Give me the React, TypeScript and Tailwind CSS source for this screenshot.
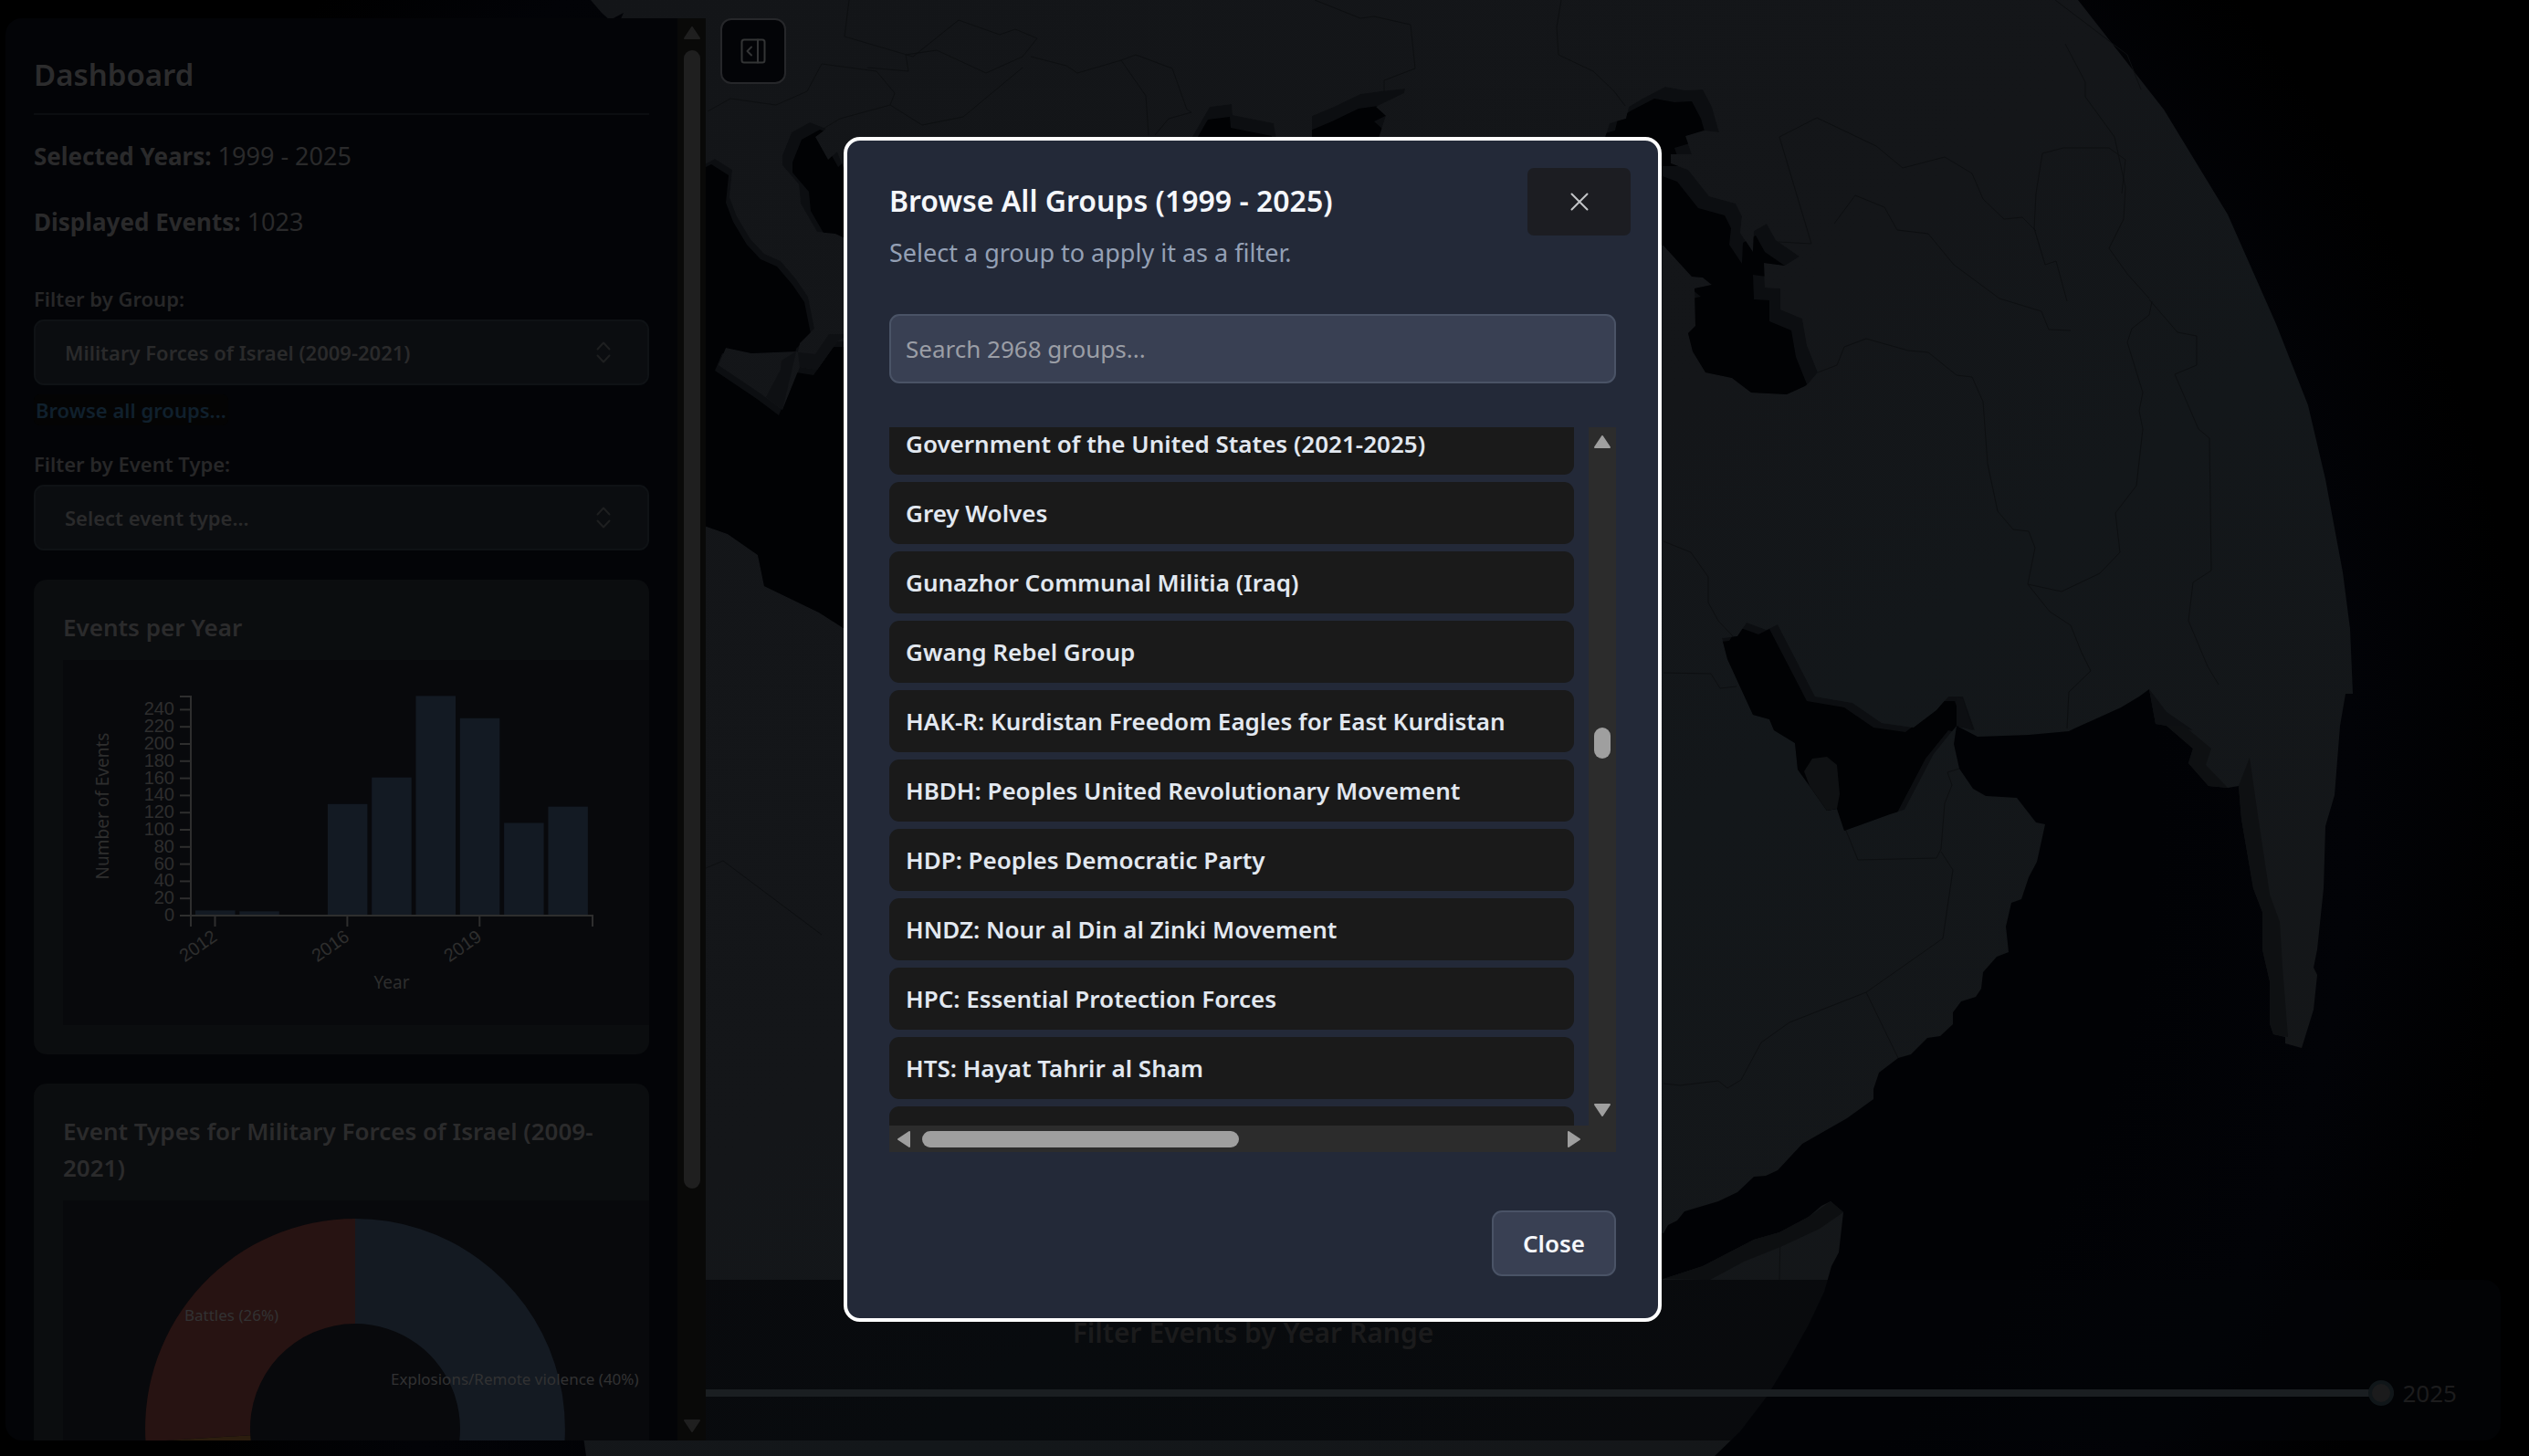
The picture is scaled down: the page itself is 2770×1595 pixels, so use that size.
import type { ReactNode } from "react";

const GROUPS = [
  "Government of the United States (2021-2025)",
  "Grey Wolves",
  "Gunazhor Communal Militia (Iraq)",
  "Gwang Rebel Group",
  "HAK-R: Kurdistan Freedom Eagles for East Kurdistan",
  "HBDH: Peoples United Revolutionary Movement",
  "HDP: Peoples Democratic Party",
  "HNDZ: Nour al Din al Zinki Movement",
  "HPC: Essential Protection Forces",
  "HTS: Hayat Tahrir al Sham",
];

const YEARLY_EVENTS = [6, 5, 1, 130, 161, 256, 230, 108, 127];
const Y_TICKS = [0, 20, 40, 60, 80, 100, 120, 140, 160, 180, 200, 220, 240];
const X_TICKS = [
  { label: "2012", index: 0 },
  { label: "2016", index: 3 },
  { label: "2019", index: 6 },
];

/* ---------- globe backdrop ---------- */

const LAND =
  "M647 0 659 14 668 22 683 14 676 30 660 60 640 200 620 700 600 1300 642 1595 L1878 1595 1906 1568 1935 1530 1957 1494 1981 1451 1998 1415 2006 1387 2014 1372 2019 1328 2005 1316 1995 1321 1981 1333 1949 1350 1921 1358 1892 1373 1865 1387 1822 1401 1700 1420 1700 1340 1822 1351 1827 1342 1837 1337 1845 1327 1882 1316 1903 1306 1921 1289 1934 1288 1947 1282 1974 1253 2023 1225 2052 1204 2052 1193 2058 1175 2079 1159 2093 1155 2111 1137 2125 1135 2139 1122 2139 1109 2148 1097 2164 1092 2170 1083 2172 1065 2187 1048 2200 1043 2197 1015 2203 989 2214 985 2222 961 2231 944 2240 903 2230 901 2209 874 2175 872 2161 864 2146 842 2140 815 2143 795 2166 807 2222 805 2266 801 2272 798 2323 775 2343 763 2354 755 2361 793 2373 795 2402 820 2397 836 2419 861 2440 863 2452 861 2455 897 2468 973 2478 999 2478 1040 2486 1075 2486 1121 2490 1133 2503 1136 2503 1143 2521 1148 2534 1106 2538 1068 2534 1060 2538 1040 2545 973 2547 905 2557 871 2563 795 2569 760 2577 760 2574 689 2566 627 2547 525 2528 444 2493 355 2440 235 2370 120 2276 0Z";

type Sea = { id: string; d: string; dx: number; dy: number };

const SEAS: Sea[] = [
  {
    id: "tyrrhenian",
    d: "M760 186 783 174 802 186 799 216 807 237 822 262 837 278 855 286 872 306 885 325 892 360 876 376 874 386 872 385 823 387 795 381 787 400 833 431 857 449 876 402 895 405 917 374 930 374 930 692 897 671 837 642 830 608 797 585 760 572Z",
    dx: -4,
    dy: 6,
  },
  {
    id: "adriatic",
    d: "M857 170 867 145 887 134 905 141 893 150 907 175 917 166 930 200 930 263 915 256 895 254 877 223 875 202 857 181Z",
    dx: 11,
    dy: 8,
  },
  { id: "black", d: "M1300 160 1325 117 1349 114 1350 126 1395 135 1397 147 1400 160Z", dx: -2, dy: 14 },
  { id: "azov", d: "M1437 160 1437 127 1461 117 1490 103 1512 100 1539 97 1538 102 1507 117 1518 127 1507 160Z", dx: -2, dy: 16 },
  {
    id: "caspian",
    d: "M1752 170 1763 135 1781 130 1784 117 1799 108 1824 95 1846 99 1865 98 1875 117 1883 145 1866 143 1846 149 1853 169 1830 169 1830 179 1849 186 1872 215 1901 223 1908 237 1906 255 1920 276 1921 253 1935 245 1945 263 1971 281 1955 291 1932 288 1933 315 1950 316 1950 339 1974 349 1979 378 1991 408 1979 422 1957 432 1918 430 1897 414 1868 408 1854 385 1849 365 1857 357 1856 316 1875 312 1865 304 1853 303 1822 269 1760 240Z",
    dx: -12,
    dy: 13,
  },
  {
    id: "gulf",
    d: "M1903 697 1913 682 1935 690 1947 684 1988 763 2029 770 2061 792 2096 797 2121 778 2134 763 2150 763 2163 800 2143 795 2118 826 2086 887 2070 892 2020 910 2012 886 2001 888 1982 861 1969 843 1966 814 1943 800 1938 788 1920 783 1892 722 1886 699Z",
    dx: -9,
    dy: 5,
  },
];

const BORDERS = [
  "M1948 265 1984 267 1949 150 1990 129 2055 160 2084 184 2130 172 2160 190 2172 218 2195 240 2215 238 2230 253",
  "M2009 245 2032 214 2064 227 2078 252 2112 256 2140 290 2190 327 2236 341 2244 361 2268 362",
  "M1991 408 2012 400 2020 380 2044 371 2090 384 2112 386 2143 411 2160 413 2172 440 2177 508 2188 560 2205 580 2222 582 2229 600 2221 640 2258 648 2300 628 2322 605 2317 562 2340 532 2347 470 2343 450 2347 430 2330 375 2335 360 2354 345 2357 330",
  "M2354 328 2385 364 2406 368 2406 400 2382 410 2408 470 2420 480 2422 625 2402 638 2397 680 2418 730 2430 750",
  "M2251 0 2330 60 2345 98 M2262 48 2284 90 2284 106 2316 150 2328 205 2326 240 2310 272 2330 300 2354 327",
  "M2221 640 2245 670 2268 685 2280 715 2290 735 2266 758 2264 798",
  "M2237 168 2260 162 2310 162 2328 175 2324 212 M2237 168 2230 212 2228 250 2240 290 2252 286 2264 330",
  "M1822 593 1852 605 1871 632 1871 660 1882 680 1898 697 M1822 737 1874 738 1884 754 1902 752",
  "M2020 905 2035 942 2121 940 2126 930 2130 880 2138 860 2133 846 2146 842",
  "M2126 933 2139 953 2128 1028 2044 1087 1960 1120 1929 1142 1907 1183 1892 1192 1882 1184 1840 1189 1822 1187 M2044 1087 2079 1159",
  "M930 0 925 40 1000 62 1050 22 1095 38 1112 32 1136 42 1120 62 1080 80 1026 55 992 60 995 78 950 74",
  "M1129 62 1168 72 1180 80 1228 66 1244 60 1284 75 1300 120 1305 123 1280 130 1265 148 M1228 66 1255 105 1258 148",
  "M775 122 800 108 850 115 884 100 900 70 960 78 980 102 975 115 920 130 900 142 M975 115 1010 137 1055 128 1120 74",
  "M1440 0 1490 20 1505 18 1545 27 1550 75 1516 88 1516 102 M1710 0 1705 30 1707 60 1745 78 1768 100 1780 116",
  "M1950 1350 1949 1402 M773 951 792 943 900 1024",
];

function GlobeBackdrop() {
  return (
    <svg className="absolute inset-0 size-full" viewBox="0 0 2770 1595" preserveAspectRatio="xMidYMid slice" aria-hidden="true">
      <defs>
        <radialGradient id="atmosphere" gradientUnits="userSpaceOnUse" cx="1400" cy="880" r="1370">
          <stop offset="0.7" stopColor="#010205" />
          <stop offset="0.86" stopColor="#020307" />
          <stop offset="1" stopColor="#000000" />
        </radialGradient>
        <linearGradient id="land" x1="0" y1="0" x2="1" y2="1">
          <stop offset="0" stopColor="#131518" />
          <stop offset="0.45" stopColor="#141619" />
          <stop offset="0.6" stopColor="#13171a" />
          <stop offset="1" stopColor="#151618" />
        </linearGradient>
        {SEAS.map((s) => (
          <clipPath key={s.id} id={`clip-${s.id}`}>
            <path d={s.d} />
          </clipPath>
        ))}
      </defs>
      <rect width="2770" height="1595" fill="url(#atmosphere)" />
      <path d={LAND} fill="url(#land)" />
      {BORDERS.map((d) => (
        <path key={d} d={d} fill="none" stroke="#0d0f11" strokeWidth="1" />
      ))}
      {SEAS.map((s) => (
        <g key={s.id} clipPath={`url(#clip-${s.id})`}>
          <path d={s.d} fill="#0c0e11" />
          <path d={s.d} fill="#010204" transform={`translate(${s.dx} ${s.dy})`} />
        </g>
      ))}
      <path d="M872 385 857 449 839 435 855 405 856 395Z M917 374 895 405 876 402 874 386 893 388 908 366 930 366Z" fill="#0e1013" />
      <path d="M2143 763 2150 766 2161 800 2143 795Z M2354 755 2373 780 2402 800 2373 795 2361 793Z" fill="#0d0f12" />
      <path d="M2452 861 2464 830 2474 900 2486 980 2497 1010 2500 1060 2506 1136 2490 1133 2486 1121 2486 1075 2478 1040 2478 999 2468 973 2455 897Z" fill="#0e1012" />
      <path d="M2402 820 2397 836 2419 861 2440 863 2416 838 2422 820 2392 795 2373 795Z" fill="#0e1012" />
      <path d="M1822 1401 1865 1387 1892 1373 1921 1358 1949 1350 1981 1333 2005 1316 2019 1328 1993 1346 1950 1366 1910 1382 1873 1402Z" fill="#0d0f11" />
      <path d="M1982 861 1976 845 1985 831 2001 829 2012 838 2015 870 2012 886 2001 888Z" fill="#0f1113" />
    </svg>
  );
}

/* ---------- scrollbars ---------- */

function Arrow({ d, className }: { d: string; className: string }) {
  return (
    <svg className={className} viewBox="0 0 18 14" aria-hidden="true">
      <path d={d} fill="currentColor" stroke="currentColor" strokeWidth="2" strokeLinejoin="round" />
    </svg>
  );
}

const UP = "M9 1 17 13H1Z";
const DOWN = "M9 13 17 1H1Z";

/* ---------- sidebar ---------- */

function FilterSelect({ id, label, value }: { id: string; label: string; value: string }) {
  return (
    <div className="flex flex-col gap-[7px]">
      <label htmlFor={id} className="text-[22px] leading-8 font-semibold text-[#272728]">
        {label}
      </label>
      <div className="relative">
        <select
          id={id}
          className="h-[72px] w-full appearance-none rounded-[11px] border-2 border-[#0f1215] bg-[#0b0d10] pr-20 pl-8 text-[22px] font-semibold text-[#2a2a2b]"
        >
          <option>{value}</option>
        </select>
        <svg className="pointer-events-none absolute top-6 right-[42px] h-6 w-4" viewBox="0 0 16 24" fill="none" stroke="#1e1f20" strokeWidth="2" aria-hidden="true">
          <path d="M1.500 8.500 8 1.500 14.500 8.500M1.500 15.500 8 22.500 14.500 15.500" strokeLinecap="round" strokeLinejoin="round" />
        </svg>
      </div>
    </div>
  );
}

function ChartCard({ title, children }: { title: string; children: ReactNode }) {
  return (
    <section className="flex shrink-0 flex-col gap-4 overflow-hidden rounded-[14px] bg-[#0b0d0f] py-8 pl-8">
      <h2 className="pr-8 text-[26px] leading-10 font-semibold text-[#2b2b2c]">{title}</h2>
      <div className="bg-[#08090c]">{children}</div>
    </section>
  );
}

function EventsChart() {
  const base = 280;
  const scale = 0.94;
  return (
    <svg className="block h-[400px] w-[640px] max-w-none" viewBox="0 0 640 400" role="img" aria-label="Events per year">
      {YEARLY_EVENTS.map((v, i) => (
        <rect key={i} x={145 + i * 48.3} y={base - v * scale} width="43.5" height={v * scale} fill="#131a23" />
      ))}
      <g fill="none" stroke="#2e2e2e" strokeWidth="2">
        <path d="M128 40H140V280H580V292M140 280V292" />
        {Y_TICKS.map((t) => (
          <path key={t} d={`M128 ${base - t * scale}H140`} />
        ))}
        {X_TICKS.map((t) => (
          <path key={t.label} d={`M${166.5 + t.index * 48.3} 280V292`} />
        ))}
      </g>
      <g fill="#2e2e2e" fontSize="20" fontFamily="'Liberation Sans', Arial, sans-serif" textAnchor="end">
        {Y_TICKS.map((t) => (
          <text key={t} x="122" y={base - t * scale + 6}>
            {t}
          </text>
        ))}
        {X_TICKS.map((t) => (
          <text key={t.label} transform={`translate(${170 + t.index * 48.3} 306) rotate(-35)`}>
            {t.label}
          </text>
        ))}
      </g>
      <g fill="#2e2e2e" fontSize="19" textAnchor="middle">
        <text x="360" y="360">
          Year
        </text>
        <text transform="translate(50 160) rotate(-90)">Number of Events</text>
      </g>
    </svg>
  );
}

function TypesChart() {
  return (
    <svg className="block h-[500px] w-[640px] max-w-none" viewBox="0 0 640 500" role="img" aria-label="Event types">
      <path d="M320 20A230 230 0 0 1 455.200 436L387.600 343A115 115 0 0 0 320 135Z" fill="#141a22" />
      <path d="M455.200 436A230 230 0 0 1 90.500 264.400L205.200 257.200A115 115 0 0 0 387.600 343Z" fill="#2b1d0e" />
      <path d="M90.500 264.400A230 230 0 0 1 320 20V135A115 115 0 0 0 205.200 257.200Z" fill="#271312" />
      <g fill="#323233" fontSize="17">
        <text x="133" y="132">
          Battles (26%)
        </text>
        <text x="359" y="202">
          Explosions/Remote violence (40%)
        </text>
      </g>
    </svg>
  );
}

function Sidebar() {
  return (
    <aside className="flex w-[767px] overflow-hidden rounded-l-[18px] bg-[#030407]">
      <div className="flex min-w-0 flex-1 flex-col overflow-hidden px-[31px] pt-[42px]">
        <h1 className="border-b-2 border-[#0b0d10] pb-[22px] text-[33px] leading-10 font-semibold text-[#2c2c2d]">Dashboard</h1>
        <div className="flex flex-col gap-7 pt-[23px] pb-[46px] text-[27px] leading-[44px] text-[#2a2a2b]">
          <p>
            <strong className="text-[26px] font-bold">Selected Years:</strong> 1999 - 2025
          </p>
          <p>
            <strong className="text-[26px] font-bold">Displayed Events:</strong> 1023
          </p>
        </div>
        <FilterSelect id="group" label="Filter by Group:" value="Military Forces of Israel (2009-2021)" />
        <button type="button" className="mt-2.5 mb-[26px] self-start rounded-md bg-[#040404] px-0.5 text-[22px] leading-[34px] font-semibold text-[#10202d]">
          Browse all groups...
        </button>
        <FilterSelect id="event-type" label="Filter by Event Type:" value="Select event type..." />
        <div className="flex flex-col gap-8 pt-8">
          <ChartCard title="Events per Year">
            <EventsChart />
          </ChartCard>
          <ChartCard title="Event Types for Military Forces of Israel (2009-2021)">
            <TypesChart />
          </ChartCard>
        </div>
      </div>
      <div className="flex w-[31px] flex-col items-center bg-[#090908] py-[9px] text-[#1f1f1f]">
        <Arrow d={UP} className="h-3.5 w-[18px]" />
        <div className="mt-3 mb-auto h-[81%] w-[18px] rounded-full bg-[#1f1f1f]" />
        <Arrow d={DOWN} className="h-3.5 w-[18px]" />
      </div>
    </aside>
  );
}

/* ---------- bottom panel ---------- */

function YearRangePanel() {
  return (
    <section className="flex flex-col gap-[26px] rounded-[18px] bg-[#030408]/65 pt-[38px] pr-12 pb-8 pl-12">
      <h2 className="text-center text-[30px] leading-10 font-semibold text-[#1b1b1c]">Filter Events by Year Range</h2>
      <div className="flex items-center gap-2.5">
        <input
          type="range"
          aria-label="End year"
          min={1999}
          max={2025}
          defaultValue={2025}
          className="h-7 flex-1 appearance-none bg-transparent [&::-webkit-slider-runnable-track]:h-2 [&::-webkit-slider-runnable-track]:rounded-full [&::-webkit-slider-runnable-track]:bg-[#1a1e21] [&::-webkit-slider-thumb]:-mt-2.5 [&::-webkit-slider-thumb]:size-7 [&::-webkit-slider-thumb]:appearance-none [&::-webkit-slider-thumb]:rounded-full [&::-webkit-slider-thumb]:border-4 [&::-webkit-slider-thumb]:border-[#101619] [&::-webkit-slider-thumb]:bg-[#1b1b1c]"
        />
        <output className="text-[26px] leading-10 text-[#1c1c1d]">2025</output>
      </div>
    </section>
  );
}

/* ---------- dialog ---------- */

function GroupDialog() {
  return (
    <div
      role="dialog"
      aria-modal="true"
      aria-labelledby="dialog-title"
      className="relative flex w-full max-w-4xl flex-col rounded-[18px] border-4 border-white bg-[#232938] px-[46px] pt-11 pb-[46px]"
    >
      <h2 id="dialog-title" className="text-[32px] leading-11 font-semibold text-[#f5f7fb]">
        Browse All Groups (1999 - 2025)
      </h2>
      <p className="pt-[17px] text-[27px] leading-9 text-[#94a0b5]">Select a group to apply it as a filter.</p>
      <button type="button" aria-label="Dismiss" className="absolute top-[30px] right-[30px] flex h-[74px] w-[113px] items-center justify-center rounded-[7px] bg-[#1c1d22]">
        <svg className="size-5" viewBox="0 0 20 20" fill="none" stroke="#c3c5c9" strokeWidth="2" strokeLinecap="round" aria-hidden="true">
          <path d="M1.500 1.500 18.500 18.500M18.500 1.500 1.500 18.500" />
        </svg>
      </button>
      <input
        type="text"
        aria-label="Search groups"
        placeholder="Search 2968 groups..."
        className="mt-[49px] h-[76px] w-full rounded-[11px] border-2 border-[#4a5366] bg-[#394053] px-4 text-[26px] text-white placeholder:text-[#9b9ea6]"
      />
      <div className="mt-12 flex h-[765px] gap-4 overflow-hidden">
        <ul className="-mt-4 flex flex-1 flex-col gap-2">
          {GROUPS.map((g) => (
            <li key={g}>
              <button type="button" className="h-[68px] w-full rounded-[11px] bg-[#1a1a1a] pl-[18px] text-left text-[26px] font-semibold text-[#e2e8f0]">
                {g}
              </button>
            </li>
          ))}
          <li className="h-[68px] shrink-0 rounded-[11px] bg-[#1a1a1a]" />
        </ul>
        <div className="flex w-[30px] flex-col items-center bg-[#2c2c2c] pt-[9px] pb-2.5 text-[#9f9f9f]">
          <Arrow d={UP} className="h-3.5 w-[18px]" />
          <div className="mt-[306px] mb-auto h-[34px] w-[18px] rounded-full bg-[#9f9f9f]" />
          <Arrow d={DOWN} className="h-3.5 w-[18px]" />
        </div>
      </div>
      <div className="flex h-[29px] items-center bg-[#2c2c2c] pr-[39px] pl-[9px] text-[#9f9f9f]">
        <svg className="h-[18px] w-3.5" viewBox="0 0 14 18" aria-hidden="true">
          <path d="M1 9 13 1V17Z" fill="currentColor" stroke="currentColor" strokeWidth="2" strokeLinejoin="round" />
        </svg>
        <div className="mr-auto ml-[13px] h-[18px] w-[347px] rounded-full bg-[#9f9f9f]" />
        <svg className="h-[18px] w-3.5" viewBox="0 0 14 18" aria-hidden="true">
          <path d="M13 9 1 1V17Z" fill="currentColor" stroke="currentColor" strokeWidth="2" strokeLinejoin="round" />
        </svg>
      </div>
      <button type="button" className="mt-16 h-[72px] self-end rounded-[11px] border-2 border-[#4a5366] bg-[#394053] px-8 text-[26px] font-semibold text-[#f5f7fb]">
        Close
      </button>
    </div>
  );
}

export default function App() {
  return (
    <main className="relative h-screen overflow-hidden bg-black font-['Noto_Sans','Open_Sans',sans-serif]">
      <GlobeBackdrop />
      <div className="relative grid h-full grid-cols-1 grid-rows-1 pt-5 pr-[31px] pb-[17px] pl-1.5">
        <div className="col-start-1 row-start-1 self-end">
          <YearRangePanel />
        </div>
        <div className="col-start-1 row-start-1 flex min-h-0 items-stretch gap-4 justify-self-start">
          <Sidebar />
          <button type="button" aria-label="Collapse sidebar" className="flex size-[72px] items-center justify-center self-start rounded-xl border-2 border-[#26272a] bg-[#030407]">
            <svg className="size-7" viewBox="0 0 28 28" fill="none" stroke="#333435" strokeWidth="2" strokeLinecap="round" strokeLinejoin="round" aria-hidden="true">
              <rect x="1.500" y="1.500" width="25" height="25" rx="2.500" />
              <path d="M19 1.500V26.500M12 9.500 7.500 14 12 18.500" />
            </svg>
          </button>
        </div>
      </div>
      <div className="absolute inset-0 flex items-center justify-center pt-[3px] pr-[26px]">
        <GroupDialog />
      </div>
    </main>
  );
}
